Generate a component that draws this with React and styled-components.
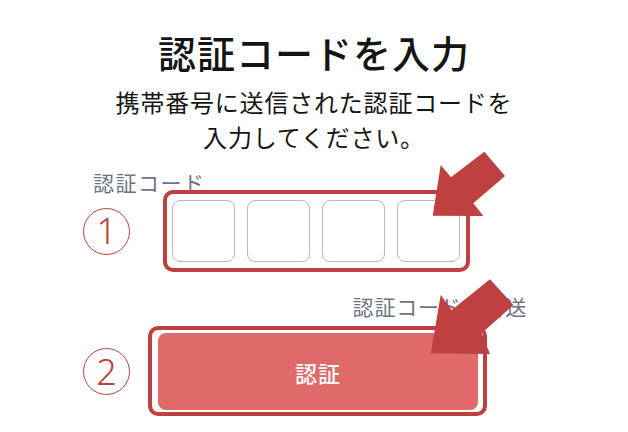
import styled, { createGlobalStyle } from "styled-components";

const GlobalStyle = createGlobalStyle`
  html, body {
    margin: 0;
    padding: 0;
    background: #ffffff;
  }
  body {
    font-family: "Noto Sans CJK JP", "Noto Sans", sans-serif;
    color: #1a1a1a;
  }
`;

const RED = "#bf4040";

const Page = styled.div`
  position: relative;
  width: 628px;
  height: 432px;
  overflow: hidden;
  box-sizing: border-box;
  padding-top: 29px;
`;

const Title = styled.h1`
  margin: 0;
  text-align: center;
  font-size: 38px;
  line-height: 46px;
  font-weight: 500;
  letter-spacing: 1px;
  color: #151515;
`;

const Lead = styled.p`
  margin: 9px 0 0;
  text-align: center;
  font-size: 24px;
  line-height: 35px;
  letter-spacing: 0.8px;
  color: #151515;
`;

const Form = styled.div`
  width: 444px;
  margin: 15px 0 0 83px;
`;

const Label = styled.div`
  padding-left: 10px;
  font-size: 21px;
  line-height: 26px;
  letter-spacing: 1.5px;
  color: #6e7484;
`;

const Row = styled.div`
  display: flex;
  align-items: center;
  margin-top: ${(p) => p.$top}px;
`;

const Marker = styled.div`
  flex: none;
  width: 47px;
  height: 47px;
  box-sizing: border-box;
  border: 1.5px solid ${RED};
  border-radius: 50%;
  display: flex;
  align-items: center;
  justify-content: center;
  font-family: "Noto Sans", sans-serif;
  font-size: 36px;
  font-weight: 300;
  line-height: 1;
  color: ${RED};
`;

const Highlight = styled.div`
  position: relative;
  margin-left: ${(p) => p.$left}px;
`;

const Outline = styled.div`
  position: absolute;
  top: ${(p) => p.$t}px;
  right: ${(p) => p.$r}px;
  bottom: ${(p) => p.$b}px;
  left: ${(p) => p.$l}px;
  border: 4px solid ${RED};
  border-radius: 10px;
  pointer-events: none;
`;

const CodeBoxes = styled.div`
  display: flex;
  gap: 12px;
`;

const CodeBox = styled.input`
  width: 63px;
  height: 62px;
  box-sizing: border-box;
  border: 1.5px solid #b4b8c4;
  border-radius: 8px;
  background: #fff;
  padding: 0;
  text-align: center;
  font-size: 26px;
  outline: none;
`;

const Resend = styled.div`
  margin-top: 31px;
  text-align: right;
  font-size: 21px;
  line-height: 26px;
  letter-spacing: 0.8px;
  color: #6e7484;
`;

const SubmitButton = styled.button`
  display: block;
  width: 320px;
  height: 77px;
  border: none;
  border-radius: 8px;
  background: #e06a6a;
  color: #ffffff;
  font-family: "Noto Sans CJK JP", sans-serif;
  font-size: 22px;
  font-weight: 500;
  letter-spacing: 1px;
  cursor: pointer;
`;

const Arrows = styled.svg`
  position: absolute;
  inset: 0;
  width: 628px;
  height: 432px;
  pointer-events: none;
`;

const App = () => {
  return (
    <>
      <GlobalStyle />
      <Page>
        <Title>認証コードを入力</Title>
        <Lead>
          携帯番号に送信された認証コードを
          <br />
          入力してください。
        </Lead>
        <Form>
          <Label>認証コード</Label>
          <Row $top={5}>
            <Marker>1</Marker>
            <Highlight $left={42}>
              <CodeBoxes>
                {[0, 1, 2, 3].map((i) => (
                  <CodeBox key={i} maxLength={1} />
                ))}
              </CodeBoxes>
              <Outline $t={-10} $r={-10} $b={-10} $l={-9} />
            </Highlight>
          </Row>
          <Resend>認証コードを再送</Resend>
          <Row $top={14}>
            <Marker>2</Marker>
            <Highlight $left={28}>
              <SubmitButton>認証</SubmitButton>
              <Outline $t={-7} $r={-9} $b={-6} $l={-10} />
            </Highlight>
          </Row>
        </Form>
        <Arrows viewBox="0 0 628 432">
          <polygon
            fill={RED}
            points="432.7,215.7 440.7,165 451,177.3 484.3,151.7 505,176 473.3,203.3 483.3,216"
          />
          <polygon
            fill={RED}
            points="430.7,353.3 440.7,295 451.7,310 490,279.3 513.3,305 481.7,333.3 490,354"
          />
        </Arrows>
      </Page>
    </>
  );
};

export default App;
